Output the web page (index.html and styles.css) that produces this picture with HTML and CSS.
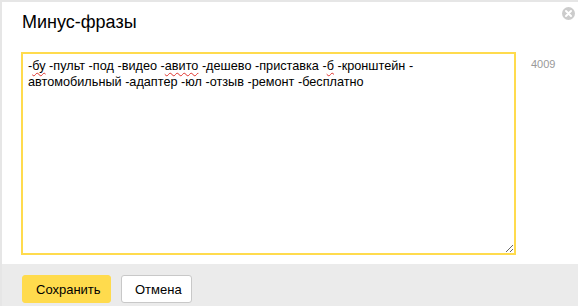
FILE: index.html
```html
<!DOCTYPE html>
<html lang="ru">
<head>
<meta charset="utf-8">
<title>Минус-фразы</title>
<link rel="stylesheet" href="styles.css">
</head>
<body>
<div class="dialog">
  <button class="close" aria-label="Закрыть">
    <svg width="13" height="13" viewBox="0 0 13 13"><circle cx="6.5" cy="6.5" r="6.5" fill="#cccccc"/><path d="M4 4 L9 9 M9 4 L4 9" stroke="#fff" stroke-width="2" stroke-linecap="round"/></svg>
  </button>
  <h1 class="title">Минус-фразы</h1>
  <div class="body">
    <div class="editor" contenteditable="true" spellcheck="false">-<span class="err">бу</span> -пульт -под -видео -<span class="err">авито</span> -дешево -приставка -<span class="err">б</span> -кронштейн -<br>автомобильный -адаптер -юл -отзыв -ремонт -бесплатно</div>
    <div class="counter">4009</div>
  </div>
  <div class="footer">
    <button class="btn btn-primary">Сохранить</button>
    <button class="btn btn-default">Отмена</button>
  </div>
</div>
</body>
</html>
```
FILE: styles.css
```css
html, body {
  margin: 0;
  padding: 0;
}
body {
  background: #e6e6e6;
  padding: 2px 0 0 2px;
  font-family: "Liberation Sans", Arial, sans-serif;
  height: 306px;
  box-sizing: border-box;
  overflow: hidden;
}
.dialog {
  position: relative;
  background: #fff;
  width: 576px;
  height: 304px;
  display: flex;
  flex-direction: column;
}
.close {
  position: absolute;
  left: 560px;
  top: 5px;
  width: 13px;
  height: 13px;
  padding: 0;
  border: 0;
  background: none;
  display: block;
}
.close svg { display: block; }
.title {
  margin: 0;
  padding: 9px 0 0 20px;
  font-size: 18px;
  line-height: 22px;
  font-weight: normal;
  color: #000;
  height: 50px;
  box-sizing: border-box;
}
.body {
  display: flex;
  padding-left: 19px;
  align-items: flex-start;
}
.editor {
  width: 495px;
  height: 203px;
  box-sizing: border-box;
  border: 2px solid #ffdb4d;
  padding: 4px 5px;
  font-size: 12.7px;
  line-height: 16px;
  color: #000;
  outline: none;
  overflow: auto;
  resize: both;
  white-space: normal;
}
.err {
  text-decoration: underline wavy #e0322b;
  text-decoration-thickness: 1px;
  text-underline-offset: 2px;
  text-decoration-skip-ink: none;
}
.counter {
  margin: 6px 0 0 15px;
  font-size: 11px;
  line-height: 13px;
  color: #999;
}
.footer {
  margin-top: 9px;
  background: #ebebeb;
  padding: 11px 0 0 20px;
  flex: 1;
  display: flex;
  gap: 10px;
  align-items: flex-start;
}
.btn {
  height: 28px;
  box-sizing: border-box;
  border-radius: 3px;
  font-family: "Liberation Sans", Arial, sans-serif;
  font-size: 13px;
  color: #000;
  padding: 0 13px;
  margin: 0;
}
.btn-primary {
  background: #ffdb4d;
  border: 1px solid #ffdb4d;
  width: 89px;
}
.btn-default {
  background: #fff;
  border: 1px solid #c8c8c8;
  width: 71px;
}
```
